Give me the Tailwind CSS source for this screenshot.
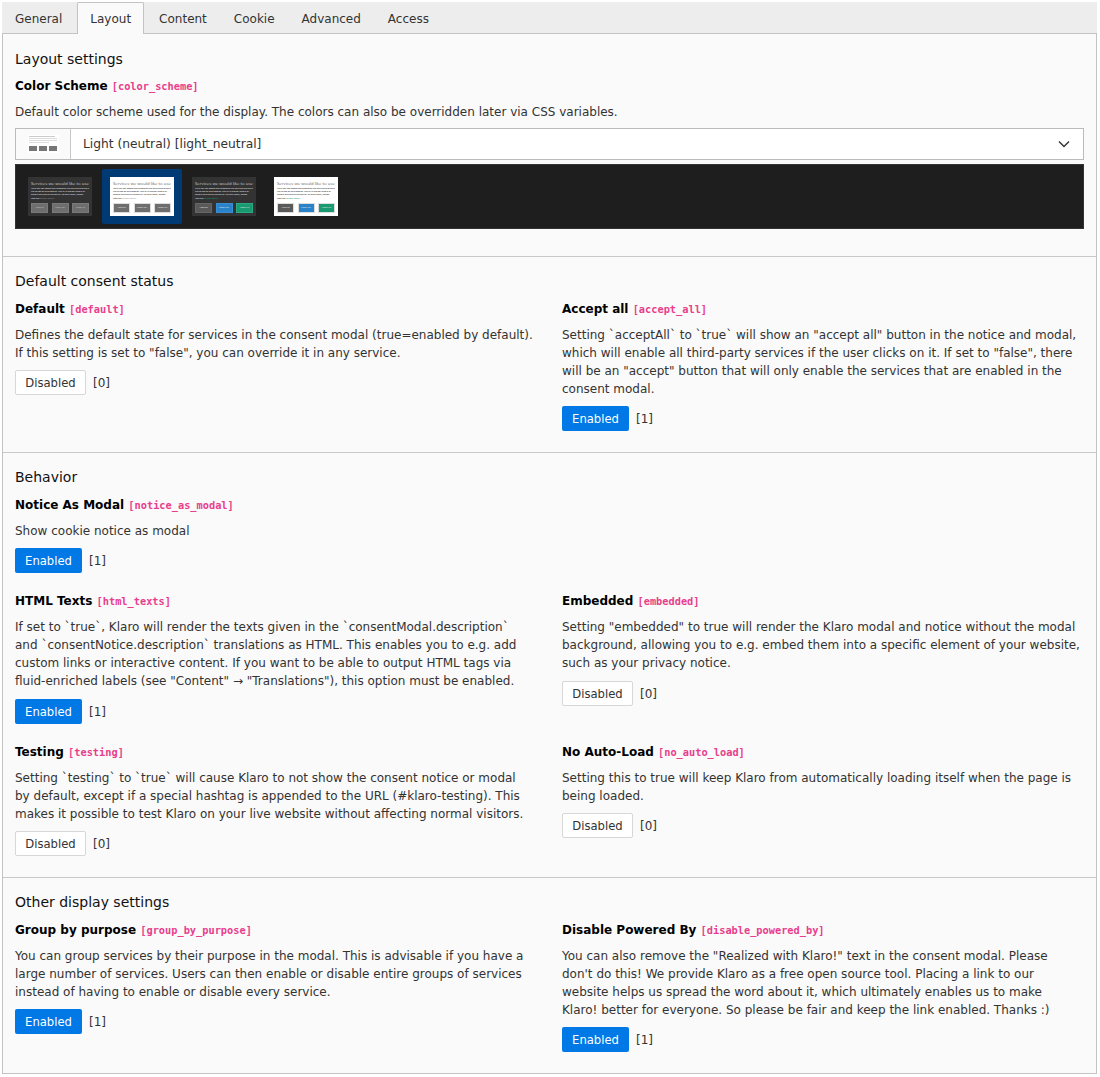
<!DOCTYPE html>
<html lang="en">
<head>
    <meta charset="UTF-8">
    <title>Klaro layout settings</title>
    <script src="https://cdn.jsdelivr.net/npm/@tailwindcss/browser@4"></script>
</head>
<body class="bg-white text-[12px] leading-[18px] text-[#333] font-['DejaVu_Sans',sans-serif]">
<div class="ml-[2px] mt-[2px] w-[1095px]">
    <!-- Tabs -->
    <nav class="flex h-[31px] gap-[3px] bg-[#ededed] pl-[1px] text-[12px] text-[#333]">
        <a class="px-[12px] pt-[7px] leading-[20px]">General</a>
        <a class="z-10 h-[32px] px-[12px] pt-[6px] leading-[20px] bg-[#fafafa] border-x border-t border-[#c3c3c3] rounded-t-[2px]">Layout</a>
        <a class="px-[12px] pt-[7px] leading-[20px]">Content</a>
        <a class="px-[12px] pt-[7px] leading-[20px]">Cookie</a>
        <a class="px-[12px] pt-[7px] leading-[20px]">Advanced</a>
        <a class="px-[12px] pt-[7px] leading-[20px]">Access</a>
    </nav>

    <div class="border border-[#c3c3c3] bg-[#fafafa]">
        <!-- Layout settings -->
        <section class="pl-[12px] pr-[12px] pt-[15px] pb-[27px]">
            <h2 class="text-[14px] leading-[20px] text-[#111]">Layout settings</h2>
            <div class="mt-[8px] h-[18px] font-bold text-black">Color Scheme <code class="font-['DejaVu_Sans_Mono',monospace] text-[10.3px] text-[#e83e8c]">[color_scheme]</code></div>
            <p class="mt-[8px]">Default color scheme used for the display. The colors can also be overridden later via CSS variables.</p>
            <div class="mt-[7px] flex h-[32px] border border-[#bbb] bg-white">
                <div class="flex w-[55px] items-center justify-center border-r border-[#c8c8c8] bg-[#fafafa]">
                    <div class="w-[31px] h-[18px] bg-white px-[1px] pt-[1px] flex flex-col overflow-hidden">
                        <div class="h-[1px] mb-[1px] w-[26px] bg-[#ccc]"></div>
                        <div class="h-[1px] mb-[1px] w-[28px] bg-[#ddd]"></div>
                        <div class="h-[1px] mb-[1px] w-[28px] bg-[#ddd]"></div>
                        <div class="h-[1px] mb-[3px] w-[20px] bg-[#ddd]"></div>
                        <div class="flex gap-[2px]">
                            <div class="w-[8px] h-[5px] bg-[#777]"></div>
                            <div class="w-[8px] h-[5px] bg-[#777]"></div>
                            <div class="w-[8px] h-[5px] bg-[#777]"></div>
                        </div>
                    </div>
                </div>
                <div class="flex-1 pl-[12px] pt-[6px] text-[12.25px] text-[#333]">Light (neutral) [light_neutral]</div>
                <svg class="mr-[13px] mt-[10px]" width="12" height="10" viewBox="0 0 12 10" fill="none" stroke="#333" stroke-width="1.4"><path d="M1 2.5 6 7.5 11 2.5"/></svg>
            </div>
            <!-- Scheme thumbnails -->
            <div class="mt-[4px] flex h-[65px] items-center border border-[#333] bg-[#1e1e1e] pl-[4px] font-['Open_Sans',sans-serif]">
                <div class="flex h-[55px] w-[80px] items-center justify-center">
                    <div class="h-[39px] w-[64px] bg-[#333] px-[3px] pt-[3px] text-[#ccc]">
                        <div class="text-[4.3px] leading-[6px] whitespace-nowrap">Services we would like to use</div>
                        <p class="mt-[1px] text-[2.1px] leading-[3.2px] h-[16px] whitespace-nowrap font-semibold text-[#ddd]">Here you can assess and customize the services that we'd<br>like to use on this website. You're in charge! Enable or<br>disable services as you see fit. To learn more, please<br>read our <span class="text-[#888]">privacy policy</span>.</p>
                        <div class="flex justify-between text-[2.2px] leading-[8px] text-center whitespace-nowrap"><div class="h-[10px] w-[17px] border border-[#7a7a7a] bg-[#6e6e6e]">I decline</div><div class="h-[10px] w-[17px] border border-[#7a7a7a] bg-[#6e6e6e]">Accept sel.</div><div class="h-[10px] w-[17px] border border-[#7a7a7a] bg-[#6e6e6e]">Accept all</div></div>
                    </div>
                </div>
                <div class="ml-[2px] flex h-[55px] w-[80px] items-center justify-center rounded-[2px] bg-[#003a75]">
                    <div class="h-[39px] w-[64px] bg-white px-[3px] pt-[3px] text-[#666]">
                        <div class="text-[4.3px] leading-[6px] whitespace-nowrap">Services we would like to use</div>
                        <p class="mt-[1px] text-[2.1px] leading-[3.2px] h-[16px] whitespace-nowrap font-semibold text-[#333]">Here you can assess and customize the services that we'd<br>like to use on this website. You're in charge! Enable or<br>disable services as you see fit. To learn more, please<br>read our <span class="text-[#999]">privacy policy</span>.</p>
                        <div class="flex justify-between text-[2.2px] leading-[8px] text-center whitespace-nowrap text-[#eee]"><div class="h-[10px] w-[17px] border border-[#ddd] bg-[#6e6e6e]">I decline</div><div class="h-[10px] w-[17px] border border-[#ddd] bg-[#6e6e6e]">Accept sel.</div><div class="h-[10px] w-[17px] border border-[#ddd] bg-[#6e6e6e]">Accept all</div></div>
                    </div>
                </div>
                <div class="ml-[10px] h-[39px] w-[64px] bg-[#333] px-[3px] pt-[3px] text-[#ccc]">
                    <div class="text-[4.3px] leading-[6px] whitespace-nowrap">Services we would like to use</div>
                    <p class="mt-[1px] text-[2.1px] leading-[3.2px] h-[16px] whitespace-nowrap font-semibold text-[#ddd]">Here you can assess and customize the services that we'd<br>like to use on this website. You're in charge! Enable or<br>disable services as you see fit. To learn more, please<br>read our <span class="text-[#1a9a70]">privacy policy</span>.</p>
                    <div class="flex justify-between text-[2.2px] leading-[8px] text-center whitespace-nowrap text-[#eee]"><div class="h-[10px] w-[17px] border border-[#666] bg-[#5a5a5a]">I decline</div><div class="h-[10px] w-[17px] border border-[#3a8dd0] bg-[#2a82c9]">Accept sel.</div><div class="h-[10px] w-[17px] border border-[#2aa880] bg-[#1a9a70]">Accept all</div></div>
                </div>
                <div class="ml-[18px] h-[39px] w-[64px] bg-white px-[3px] pt-[3px] text-[#666]">
                    <div class="text-[4.3px] leading-[6px] whitespace-nowrap">Services we would like to use</div>
                    <p class="mt-[1px] text-[2.1px] leading-[3.2px] h-[16px] whitespace-nowrap font-semibold text-[#333]">Here you can assess and customize the services that we'd<br>like to use on this website. You're in charge! Enable or<br>disable services as you see fit. To learn more, please<br>read our <span class="text-[#1a9a70]">privacy policy</span>.</p>
                    <div class="flex justify-between text-[2.2px] leading-[8px] text-center whitespace-nowrap text-[#eee]"><div class="h-[10px] w-[17px] border border-[#ddd] bg-[#5a5a5a]">I decline</div><div class="h-[10px] w-[17px] border border-[#ddd] bg-[#2a82c9]">Accept sel.</div><div class="h-[10px] w-[17px] border border-[#ddd] bg-[#1a9a70]">Accept all</div></div>
                </div>
            </div>
        </section>

        <!-- Default consent status -->
        <section class="border-t border-[#c8c8c8] pl-[12px] pr-[12px] pt-[14px] pb-[21px]">
            <h2 class="text-[14px] leading-[20px] text-[#111]">Default consent status</h2>
            <div class="mt-[9px] grid grid-cols-[547px_1fr] items-start">
                <div>
                    <div class="h-[18px] font-bold text-black">Default <code class="font-['DejaVu_Sans_Mono',monospace] text-[10.3px] text-[#e83e8c]">[default]</code></div>
                    <p class="mt-[8px]">Defines the default state for services in the consent modal (true=enabled by default).<br>If this setting is set to "false", you can override it in any service.</p>
                    <div class="mt-[8px] flex items-center"><button class="h-[25px] w-[71px] rounded-[2px] border border-[#d7d7d7] bg-white text-[11.6px] text-[#333]">Disabled</button><span class="ml-[7px]">[0]</span></div>
                </div>
                <div>
                    <div class="h-[18px] font-bold text-black">Accept all <code class="font-['DejaVu_Sans_Mono',monospace] text-[10.3px] text-[#e83e8c]">[accept_all]</code></div>
                    <p class="mt-[8px]">Setting `acceptAll` to `true` will show an "accept all" button in the notice and modal,<br>which will enable all third-party services if the user clicks on it. If set to "false", there<br>will be an "accept" button that will only enable the services that are enabled in the<br>consent modal.</p>
                    <div class="mt-[8px] flex items-center"><button class="h-[25px] w-[67px] rounded-[2px] bg-[#0078e6] text-[11.6px] text-white">Enabled</button><span class="ml-[7px]">[1]</span></div>
                </div>
            </div>
        </section>

        <!-- Behavior -->
        <section class="border-t border-[#c8c8c8] pl-[12px] pr-[12px] pt-[14px] pb-[21px]">
            <h2 class="text-[14px] leading-[20px] text-[#111]">Behavior</h2>
            <div class="mt-[9px] grid grid-cols-[547px_1fr] items-start gap-y-[19px]">
                <div>
                    <div class="h-[18px] font-bold text-black">Notice As Modal <code class="font-['DejaVu_Sans_Mono',monospace] text-[10.3px] text-[#e83e8c]">[notice_as_modal]</code></div>
                    <p class="mt-[8px]">Show cookie notice as modal</p>
                    <div class="mt-[8px] flex items-center"><button class="h-[25px] w-[67px] rounded-[2px] bg-[#0078e6] text-[11.6px] text-white">Enabled</button><span class="ml-[7px]">[1]</span></div>
                </div>
                <div></div>
                <div>
                    <div class="h-[18px] font-bold text-black">HTML Texts <code class="font-['DejaVu_Sans_Mono',monospace] text-[10.3px] text-[#e83e8c]">[html_texts]</code></div>
                    <p class="mt-[8px]">If set to `true`, Klaro will render the texts given in the `consentModal.description`<br>and `consentNotice.description` translations as HTML. This enables you to e.g. add<br>custom links or interactive content. If you want to be able to output HTML tags via<br>fluid-enriched labels (see "Content" → "Translations"), this option must be enabled.</p>
                    <div class="mt-[9px] flex items-center"><button class="h-[25px] w-[67px] rounded-[2px] bg-[#0078e6] text-[11.6px] text-white">Enabled</button><span class="ml-[7px]">[1]</span></div>
                </div>
                <div>
                    <div class="h-[18px] font-bold text-black">Embedded <code class="font-['DejaVu_Sans_Mono',monospace] text-[10.3px] text-[#e83e8c]">[embedded]</code></div>
                    <p class="mt-[8px]">Setting "embedded" to true will render the Klaro modal and notice without the modal<br>background, allowing you to e.g. embed them into a specific element of your website,<br>such as your privacy notice.</p>
                    <div class="mt-[9px] flex items-center"><button class="h-[25px] w-[71px] rounded-[2px] border border-[#d7d7d7] bg-white text-[11.6px] text-[#333]">Disabled</button><span class="ml-[7px]">[0]</span></div>
                </div>
                <div>
                    <div class="h-[18px] font-bold text-black">Testing <code class="font-['DejaVu_Sans_Mono',monospace] text-[10.3px] text-[#e83e8c]">[testing]</code></div>
                    <p class="mt-[8px]">Setting `testing` to `true` will cause Klaro to not show the consent notice or modal<br>by default, except if a special hashtag is appended to the URL (#klaro-testing). This<br>makes it possible to test Klaro on your live website without affecting normal visitors.</p>
                    <div class="mt-[8px] flex items-center"><button class="h-[25px] w-[71px] rounded-[2px] border border-[#d7d7d7] bg-white text-[11.6px] text-[#333]">Disabled</button><span class="ml-[7px]">[0]</span></div>
                </div>
                <div>
                    <div class="h-[18px] font-bold text-black">No Auto-Load <code class="font-['DejaVu_Sans_Mono',monospace] text-[10.3px] text-[#e83e8c]">[no_auto_load]</code></div>
                    <p class="mt-[8px]">Setting this to true will keep Klaro from automatically loading itself when the page is<br>being loaded.</p>
                    <div class="mt-[8px] flex items-center"><button class="h-[25px] w-[71px] rounded-[2px] border border-[#d7d7d7] bg-white text-[11.6px] text-[#333]">Disabled</button><span class="ml-[7px]">[0]</span></div>
                </div>
            </div>
        </section>

        <!-- Other display settings -->
        <section class="border-t border-[#c8c8c8] pl-[12px] pr-[12px] pt-[14px] pb-[21px]">
            <h2 class="text-[14px] leading-[20px] text-[#111]">Other display settings</h2>
            <div class="mt-[9px] grid grid-cols-[547px_1fr] items-start">
                <div>
                    <div class="h-[18px] font-bold text-black">Group by purpose <code class="font-['DejaVu_Sans_Mono',monospace] text-[10.3px] text-[#e83e8c]">[group_by_purpose]</code></div>
                    <p class="mt-[8px]">You can group services by their purpose in the modal. This is advisable if you have a<br>large number of services. Users can then enable or disable entire groups of services<br>instead of having to enable or disable every service.</p>
                    <div class="mt-[8px] flex items-center"><button class="h-[25px] w-[67px] rounded-[2px] bg-[#0078e6] text-[11.6px] text-white">Enabled</button><span class="ml-[7px]">[1]</span></div>
                </div>
                <div>
                    <div class="h-[18px] font-bold text-black">Disable Powered By <code class="font-['DejaVu_Sans_Mono',monospace] text-[10.3px] text-[#e83e8c]">[disable_powered_by]</code></div>
                    <p class="mt-[8px]">You can also remove the "Realized with Klaro!" text in the consent modal. Please<br>don't do this! We provide Klaro as a free open source tool. Placing a link to our<br>website helps us spread the word about it, which ultimately enables us to make<br>Klaro! better for everyone. So please be fair and keep the link enabled. Thanks :)</p>
                    <div class="mt-[8px] flex items-center"><button class="h-[25px] w-[67px] rounded-[2px] bg-[#0078e6] text-[11.6px] text-white">Enabled</button><span class="ml-[7px]">[1]</span></div>
                </div>
            </div>
        </section>
    </div>
</div>
</body>
</html>
